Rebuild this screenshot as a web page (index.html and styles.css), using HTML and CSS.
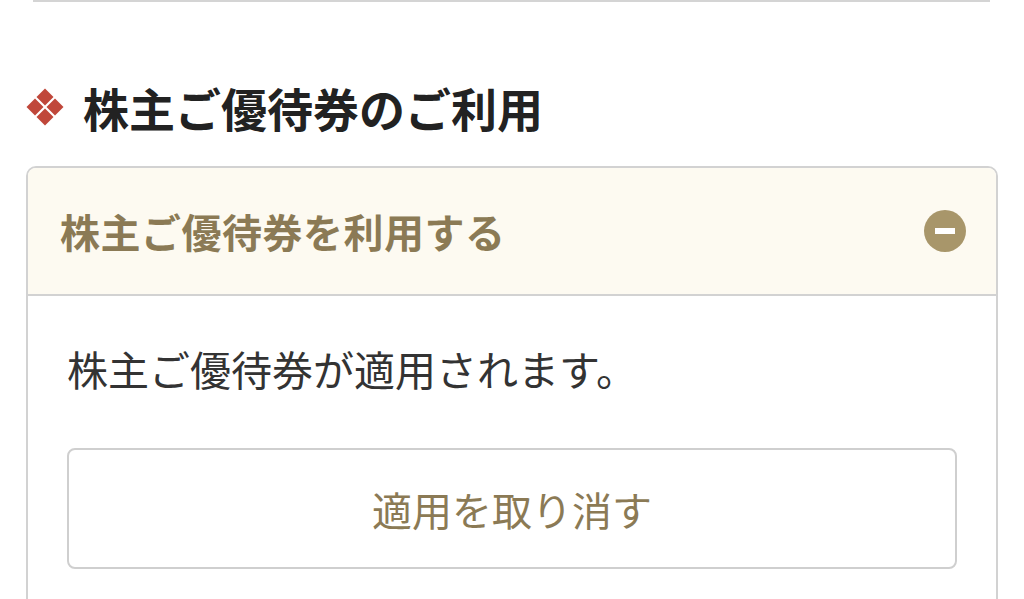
FILE: index.html
```html
<!DOCTYPE html>
<html lang="ja">
<head>
    <meta charset="UTF-8">
    <meta name="viewport" content="width=device-width, initial-scale=1.0">
    <title>株主ご優待券のご利用</title>
    <link rel="stylesheet" href="styles.css">
</head>
<body>
    <div class="top-rule"></div>

    <h2 class="section-title">
        <svg class="title-mark" width="40" height="40" viewBox="0 0 40 40">
            <polygon points="20,1.5 28.5,10 20,18.5 11.5,10" />
            <polygon points="10,11.5 18.5,20 10,28.5 1.5,20" />
            <polygon points="30,11.5 38.5,20 30,28.5 21.5,20" />
            <polygon points="20,21.5 28.5,30 20,38.5 11.5,30" />
        </svg>
        <span>株主ご優待券のご利用</span>
    </h2>

    <div class="card">
        <div class="card-header">
            <span class="card-title">株主ご優待券を利用する</span>
            <svg class="toggle" width="42" height="42" viewBox="0 0 42 42">
                <circle cx="21" cy="21" r="21" />
                <rect x="11" y="18" width="20" height="6" fill="#fff" />
            </svg>
        </div>
        <div class="card-body">
            <p class="note">株主ご優待券が適用されます。</p>
            <button type="button" class="btn">適用を取り消す</button>
        </div>
    </div>
</body>
</html>
```

FILE: styles.css
```css
body {
    margin: 0;
    background-color: #fff;
    font-family: "Noto Sans CJK JP", "Noto Sans", sans-serif;
    color: #333;
    overflow: hidden;
}
.top-rule {
    height: 2px;
    margin: 0 34px 0 33px;
    background-color: #d4d4d4;
}
.section-title {
    display: flex;
    align-items: center;
    gap: 18px;
    margin: 0;
    padding: 77px 0 0 25px;
    font-size: 46px;
    line-height: 56px;
    font-weight: bold;
    color: #222;
}
.title-mark {
    fill: #c0473a;
    flex-shrink: 0;
}
.card {
    margin: 31px 26px 0 26px;
    border: 2px solid #d2d2d2;
    border-radius: 10px;
    overflow: hidden;
}
.card-header {
    display: flex;
    align-items: center;
    justify-content: space-between;
    height: 126px;
    padding: 0 30px 0 32px;
    background-color: #fdfaf1;
    border-bottom: 2px solid #d2d2d2;
}
.card-title {
    font-size: 40px;
    font-weight: bold;
    color: #8b7a55;
    letter-spacing: 0.5px;
}
.toggle {
    fill: #a8966a;
}
.card-body {
    padding: 43px 39px 40px 39px;
}
.note {
    margin: 0 0 50px 0;
    font-size: 41px;
    line-height: 59px;
}
.btn {
    display: block;
    width: 100%;
    height: 121px;
    background-color: #fff;
    border: 2px solid #cfcfcf;
    border-radius: 8px;
    font-family: inherit;
    font-size: 40px;
    color: #8b7a55;
    cursor: pointer;
}
```
